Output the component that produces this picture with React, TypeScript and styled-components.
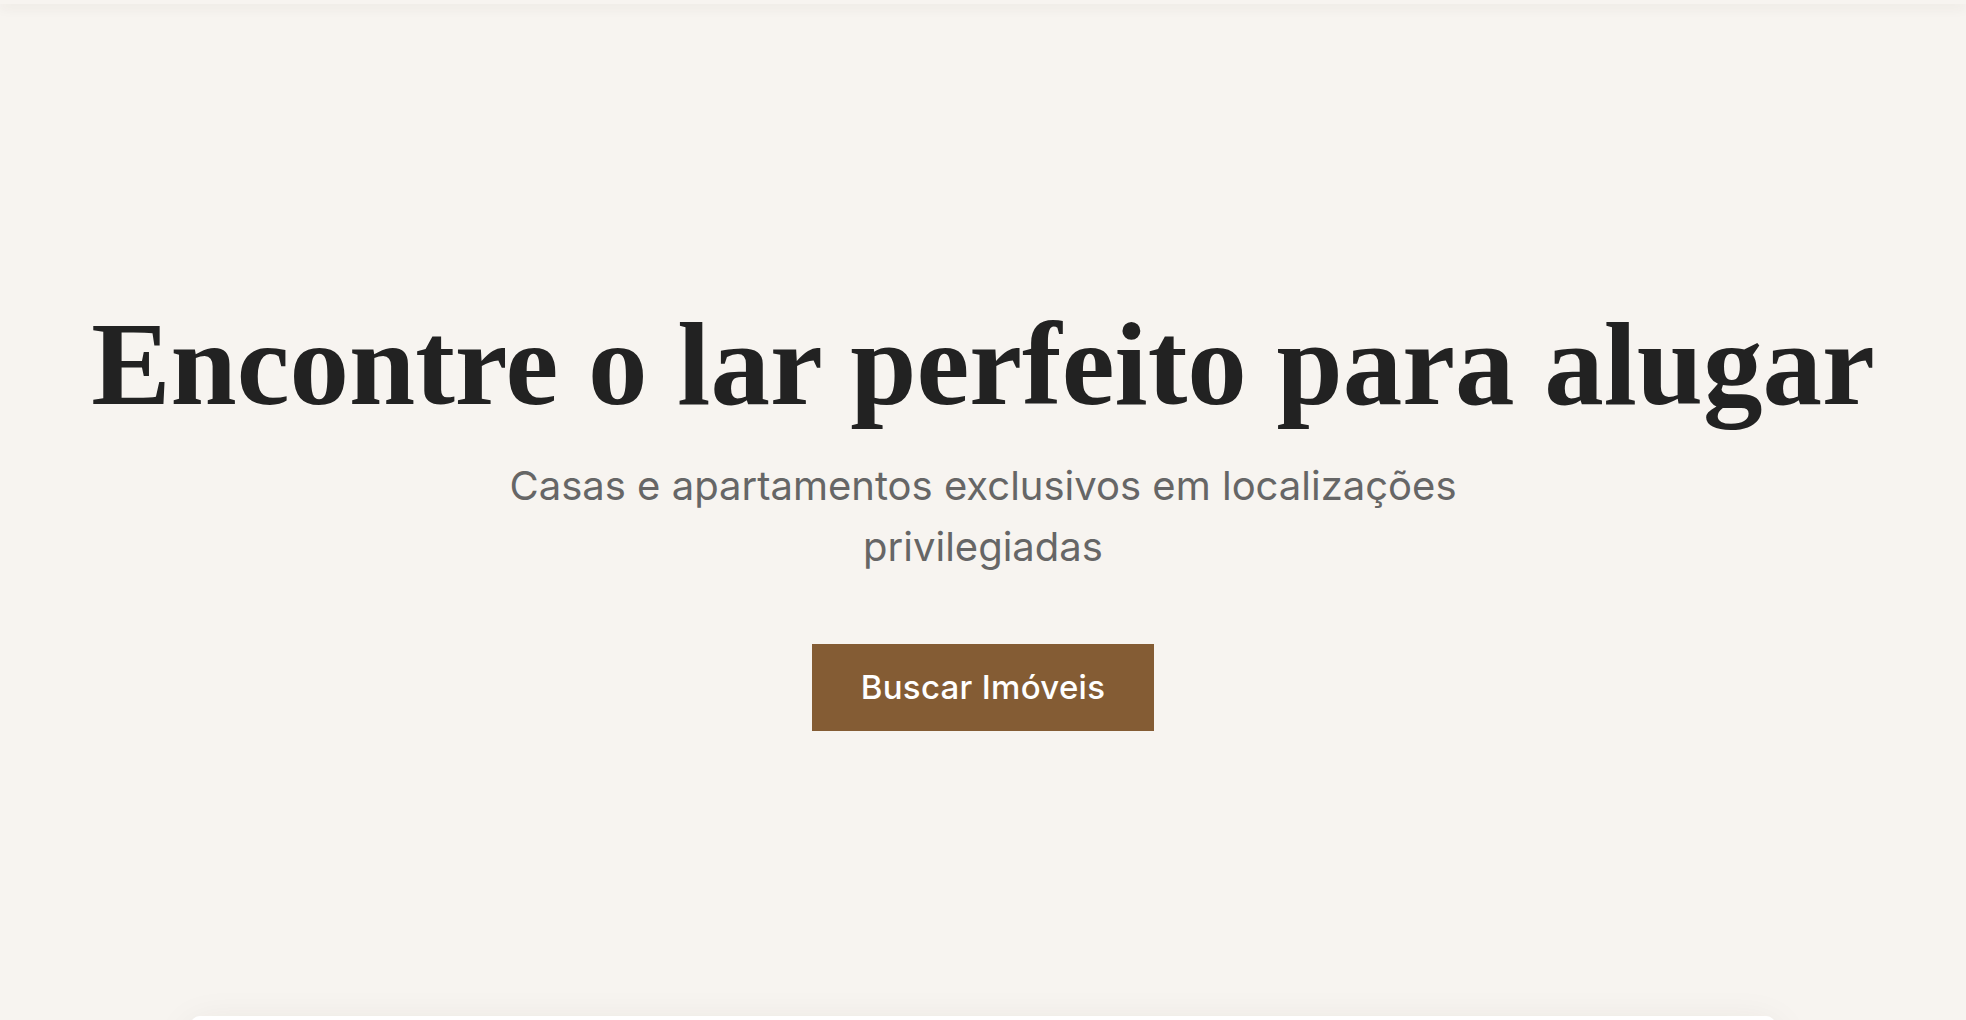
import React from "react";
import styled, { createGlobalStyle } from "styled-components";

const GlobalStyle = createGlobalStyle`
  html, body {
    margin: 0;
    padding: 0;
    background: #f7f4f0;
  }
  body {
    font-family: "Inter", "Liberation Sans", sans-serif;
    overflow: hidden;
  }
  * { box-sizing: border-box; }
`;

const Page = styled.div`
  min-height: 1020px;
  background: #f7f4f0;
  display: flex;
  flex-direction: column;
`;

const TopBar = styled.header`
  height: 4px;
  background: #f7f4f0;
  position: relative;
  z-index: 2;
  box-shadow: 0 3px 12px rgba(60, 45, 30, 0.1);
`;

const Hero = styled.section`
  display: flex;
  flex-direction: column;
  align-items: center;
  text-align: center;
  padding: 289px 40px 0;
  height: 1012px;
`;

const Title = styled.h1`
  margin: 0;
  font-family: "Liberation Serif", "Times New Roman", serif;
  font-weight: 700;
  font-size: 119px;
  line-height: 1.2;
  color: #222222;
  letter-spacing: 0;
  white-space: nowrap;
`;

const Subtitle = styled.p`
  margin: 19px 0 0;
  max-width: 1000px;
  font-family: "Inter", "Liberation Sans", sans-serif;
  font-weight: 400;
  font-size: 40px;
  line-height: 61px;
  color: #666666;
`;

const Button = styled.button`
  margin-top: 67px;
  width: 342px;
  height: 87px;
  border: none;
  background: #845c34;
  color: #ffffff;
  font-family: "Inter", "Liberation Sans", sans-serif;
  font-weight: 500;
  font-size: 33px;
  letter-spacing: 0.3px;
  cursor: pointer;
`;

const Card = styled.div`
  width: 1586px;
  height: 240px;
  margin: 0 auto;
  background: #ffffff;
  border-radius: 10px;
  box-shadow: 0 10px 40px rgba(60, 45, 30, 0.09);
`;

export default function App() {
  return (
    <>
      <GlobalStyle />
      <Page>
        <TopBar />
        <Hero>
          <Title>Encontre o lar perfeito para alugar</Title>
          <Subtitle>
            Casas e apartamentos exclusivos em localizações privilegiadas
          </Subtitle>
          <Button>Buscar Imóveis</Button>
        </Hero>
        <Card />
      </Page>
    </>
  );
}
